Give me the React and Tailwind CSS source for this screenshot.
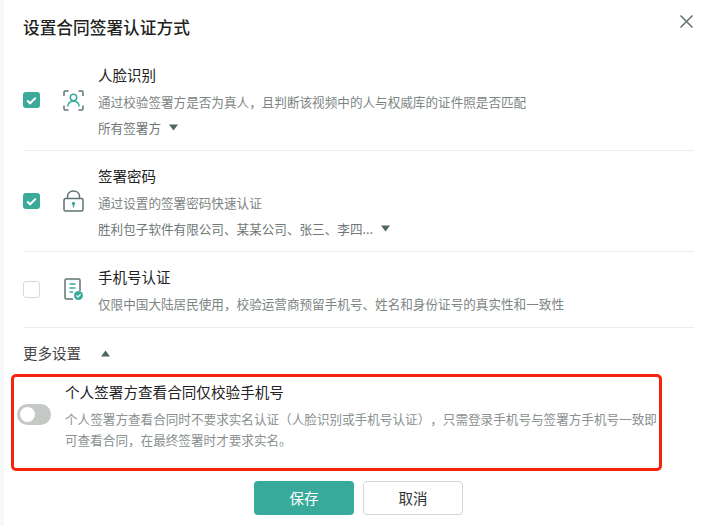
import React from 'react';

const FONT = "font-['Noto_Sans_CJK_SC','Noto_Sans',sans-serif]";

const Checkbox = ({ checked }) =>
  checked ? (
    <span className="flex h-[16.5px] w-[16.5px] items-center justify-center rounded-[3px] bg-[#3aaa9b]">
      <svg width="11" height="9" viewBox="0 0 11 9" fill="none">
        <path d="M1.2 4.6 4.1 7.3 9.8 1.6" stroke="#fff" strokeWidth="2" />
      </svg>
    </span>
  ) : (
    <span className="h-[16.5px] w-[16.5px] rounded-[3px] border-[1.5px] border-[#d5dad8] bg-white" />
  );

const FaceIcon = () => (
  <svg width="21" height="21" viewBox="0 0 21 21" fill="none" strokeWidth="1.5">
    <path d="M1 6V2.2C1 1.5 1.5 1 2.2 1H5.5M15.5 1H18.8C19.5 1 20 1.5 20 2.2V6M20 15.5V18.8C20 19.5 19.5 20 18.8 20H15.5M5.5 20H2.2C1.5 20 1 19.5 1 18.8V15.5" stroke="#5d7673" />
    <circle cx="10.5" cy="7.5" r="3.2" stroke="#3aaa9b" />
    <path d="M4.8 16.5C5 13.3 7 11.2 10.5 11.2S16 13.3 16.2 16.5" stroke="#3aaa9b" />
  </svg>
);

const LockIcon = () => (
  <svg width="21" height="22" viewBox="0 0 21 22" fill="none" strokeWidth="1.5">
    <path d="M4.5 9V6.5C4.5 3.2 7 1 10.5 1S16.5 3.2 16.5 6.5V9" stroke="#5d7673" />
    <rect x="1" y="8.5" width="19" height="12.5" rx="1.5" stroke="#5d7673" />
    <circle cx="10.5" cy="13.5" r="1.7" fill="#3aaa9b" />
    <rect x="9.8" y="14" width="1.4" height="3.5" fill="#3aaa9b" />
  </svg>
);

const PhoneDocIcon = () => (
  <svg width="20" height="23" viewBox="0 0 20 23" fill="none" strokeWidth="1.5">
    <path d="M9 21H2.2C1.5 21 1 20.5 1 19.8V2.2C1 1.5 1.5 1 2.2 1H14.8C15.5 1 16 1.5 16 2.2V13" stroke="#5d7673" />
    <path d="M5.5 6H11.5M5.5 10H11.5M5.5 14H9" stroke="#3aaa9b" />
    <circle cx="14.5" cy="17.5" r="4.5" fill="#3aaa9b" />
    <path d="M12.4 17.5 14 19 16.7 16.2" stroke="#fff" strokeWidth="1.2" />
  </svg>
);

const Caret = ({ up }) => (
  <svg width="9" height="7" viewBox="0 0 9 7" className="ml-[8px] inline-block">
    <path d={up ? 'M4.5 0.5 9 6.5H0Z' : 'M0 0.5H9L4.5 6.5Z'} fill="#4d6663" />
  </svg>
);

const AuthRow = ({ checked, icon, title, desc, sub, className }) => (
  <div className={`flex items-center border-b border-[#eaefed] ${className}`}>
    <Checkbox checked={checked} />
    <span className="ml-[23.5px] flex w-[21px] justify-center">{icon}</span>
    <div className="ml-[14px] mt-[2px]">
      <div className="text-[14.5px] leading-[22px] text-[#222]">{title}</div>
      <div className="mt-[5px] text-[12.6px] leading-[22px] text-[#7d8583]">{desc}</div>
      {sub && (
        <div className="mt-[4px] flex items-center text-[12.6px] leading-[22px] text-[#6f7876]">
          {sub}
          <Caret />
        </div>
      )}
    </div>
  </div>
);

export default function App() {
  return (
    <div className={`${FONT} h-[526px] w-[703px] overflow-hidden bg-[#f6f8fa] pl-[4px]`}>
      <div className="relative h-full bg-white">
        <button type="button" className="absolute right-[9px] top-[14px]">
          <svg width="15" height="15" viewBox="0 0 15 15" fill="none">
            <path d="M1.5 1.5 13.5 13.5M13.5 1.5 1.5 13.5" stroke="#60706e" strokeWidth="1.5" />
          </svg>
        </button>

        <h1 className="pl-[19px] pt-[15px] text-[16.7px] font-medium leading-[24px] text-[#222]">设置合同签署认证方式</h1>

        <div className="ml-[19px] mr-[9px] mt-[11px]">
          <AuthRow
            checked
            icon={<FaceIcon />}
            title="人脸识别"
            desc="通过校验签署方是否为真人，且判断该视频中的人与权威库的证件照是否匹配"
            sub="所有签署方"
            className="h-[101px]"
          />
          <AuthRow
            checked
            icon={<LockIcon />}
            title="签署密码"
            desc="通过设置的签署密码快速认证"
            sub="胜利包子软件有限公司、某某公司、张三、李四..."
            className="h-[101px]"
          />
          <AuthRow
            icon={<PhoneDocIcon />}
            title="手机号认证"
            desc="仅限中国大陆居民使用，校验运营商预留手机号、姓名和身份证号的真实性和一致性"
            className="h-[76px]"
          />
        </div>

        <div className="ml-[19px] mt-[14px] flex items-center text-[14.5px] leading-[22px] text-[#444]">
          更多设置
          <span className="ml-[12px] flex"><Caret up /></span>
        </div>

        <div className="ml-[7px] mt-[10px] flex h-[97px] w-[651px] rounded-[5px] border-[3px] border-[#f5250c] pl-[3px]">
          <span className="relative mt-[27px] h-[21px] w-[34px] rounded-full bg-[#c4c9c6]">
            <span className="absolute left-[3px] top-[3px] h-[15px] w-[15px] rounded-full bg-white" />
          </span>
          <div className="ml-[14px] min-w-0 flex-1">
            <div className="mt-[4px] text-[14.6px] leading-[22px] text-[#222]">个人签署方查看合同仅校验手机号</div>
            <p className="mt-[5px] w-[594px] text-[12.6px] leading-[21px] text-[#8a918f] [text-spacing-trim:space-all]">
              个人签署方查看合同时不要求实名认证（人脸识别或手机号认证），只需登录手机号与签署方手机号一致即可查看合同，在最终签署时才要求实名。
            </p>
          </div>
        </div>

        <div className="ml-[250px] mt-[10px] flex gap-[9px]">
          <button type="button" className="h-[34px] w-[100px] rounded-[4px] bg-[#38aa9b] text-[14.5px] text-white">保存</button>
          <button type="button" className="h-[34px] w-[100px] rounded-[4px] border border-[#d3d7d6] bg-white text-[14.5px] text-[#333]">取消</button>
        </div>
      </div>
    </div>
  );
}
